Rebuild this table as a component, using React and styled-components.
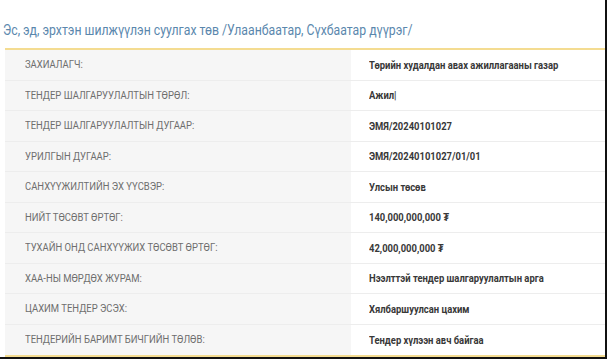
import React from "react";
import styled, { createGlobalStyle } from "styled-components";

const GlobalStyle = createGlobalStyle`
	html, body {
		margin: 0;
		padding: 0;
		background: #fff;
	}
`;

const Frame = styled.div`
	width: 607px;
	height: 359px;
	box-sizing: border-box;
	border-right: 2px solid #111;
	border-bottom: 2px solid #111;
	padding: 20px 0 0 3px;
	font-family: "Roboto", "Open Sans", sans-serif;
	overflow: hidden;
`;

// narrow face of the original is not installed, so squeeze the text
const Squeeze = styled.span`
	display: inline-block;
	white-space: nowrap;
	transform: scaleX(${(p) => p.$k});
	transform-origin: left center;
`;

const Title = styled.h3`
	margin: 0 0 7px;
	font-size: 14px;
	font-weight: normal;
	color: #5a87ad;
	line-height: 21px;
	white-space: nowrap;
`;

const Table = styled.div`
	margin-left: 2px;
	border-top: 2px solid #f4dc91;
	border-bottom: 2px solid #f4dc91;
`;

const Row = styled.div`
	display: grid;
	grid-template-columns: 346px 1fr;
	height: 30.5px;
	box-sizing: border-box;
	border-bottom: 1px solid #ededed;
	&:last-child {
		border-bottom: none;
	}
`;

const Label = styled.div`
	display: flex;
	align-items: center;
	padding-left: 20px;
	background: #f6f6f6;
	color: #6e6e6e;
	font-size: 11px;
	text-transform: uppercase;
	overflow: hidden;
`;

const Value = styled.div`
	display: flex;
	align-items: center;
	padding-left: 18px;
	background: #fff;
	color: #383838;
	font-size: 11.5px;
	font-weight: bold;
	overflow: hidden;
`;

const rows = [
	["Захиалагч:", "Төрийн худалдан авах ажиллагааны газар"],
	["Тендер шалгаруулалтын төрөл:", "Ажил|"],
	["Тендер шалгаруулалтын дугаар:", "ЭМЯ/20240101027"],
	["Урилгын дугаар:", "ЭМЯ/20240101027/01/01"],
	["Санхүүжилтийн эх үүсвэр:", "Улсын төсөв"],
	["Нийт төсөвт өртөг:", "140,000,000,000 ₮"],
	["Тухайн онд санхүүжих төсөвт өртөг:", "42,000,000,000 ₮"],
	["ХАА-ны мөрдөх журам:", "Нээлттэй тендер шалгаруулалтын арга"],
	["Цахим тендер эсэх:", "Хялбаршуулсан цахим"],
	["Тендерийн баримт бичгийн төлөв:", "Тендер хүлээн авч байгаа"],
];

export default function App() {
	return (
		<React.Fragment>
			<GlobalStyle />
			<Frame>
				<Title>
					<Squeeze $k={0.875}>
						Эс, эд, эрхтэн шилжүүлэн суулгах төв /Улаанбаатар, Сүхбаатар дүүрэг/
					</Squeeze>
				</Title>
				<Table>
					{rows.map(([label, value]) => (
						<Row key={label}>
							<Label>
								<Squeeze $k={0.86}>{label}</Squeeze>
							</Label>
							<Value>
								<Squeeze $k={0.82}>{value}</Squeeze>
							</Value>
						</Row>
					))}
				</Table>
			</Frame>
		</React.Fragment>
	);
}
